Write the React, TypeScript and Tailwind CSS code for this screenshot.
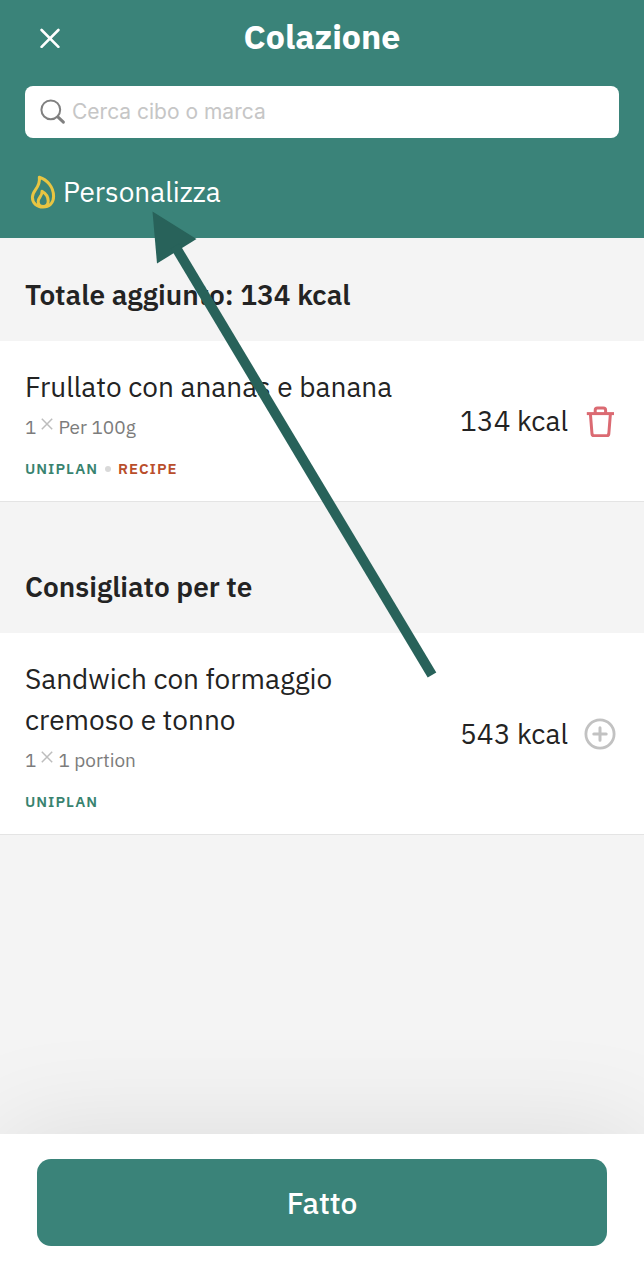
type Tag = {
  label: string;
  kind: "plan" | "recipe";
};

type Food = {
  name: string;
  amount: string;
  unit: string;
  kcal: number;
  tags: Tag[];
  added: boolean;
};

const addedFoods: Food[] = [
  {
    name: "Frullato con ananas e banana",
    amount: "1",
    unit: "Per 100g",
    kcal: 134,
    tags: [
      { label: "UNIPLAN", kind: "plan" },
      { label: "RECIPE", kind: "recipe" },
    ],
    added: true,
  },
];

const suggestedFoods: Food[] = [
  {
    name: "Sandwich con formaggio cremoso e tonno",
    amount: "1",
    unit: "1 portion",
    kcal: 543,
    tags: [{ label: "UNIPLAN", kind: "plan" }],
    added: false,
  },
];

const CloseIcon = () => (
  <svg viewBox="0 0 20 20" className="size-5" fill="none" stroke="currentColor" strokeWidth="2.6" strokeLinecap="round">
    <path d="M1.6 2 18.4 18.8M18.4 2 1.6 18.8" />
  </svg>
);

const SearchIcon = () => (
  <svg viewBox="0 0 26 26" className="size-[26px] shrink-0 text-[#808080]" fill="none" stroke="currentColor" strokeLinecap="round">
    <circle cx="10.8" cy="10.8" r="9.4" strokeWidth="2" />
    <path d="m17.8 17.8 5.6 5.4" strokeWidth="3" />
  </svg>
);

const FlameIcon = () => (
  <svg viewBox="0 0 26 34" className="h-[34px] w-[26px] shrink-0 text-[#e8c542]" fill="none" stroke="currentColor" strokeWidth="3" strokeLinejoin="round">
    <path d="M9.3 2.2C17 4.6 23.6 11.8 23.6 21.3 23.6 28 19.3 32 13 32 6.8 32 2.4 28 2.4 22.3 2.4 14.5 10.9 12.8 9.3 2.2Z" />
    <path d="M12 16.2C15.6 18.2 18.2 22 18.2 26 18.2 29.4 16.2 31.4 13.2 31.4 10 31.4 8.2 29.4 8.2 26.4 8.2 22.4 12.6 20.8 12 16.2Z" />
  </svg>
);

const TrashIcon = () => (
  <svg viewBox="0 0 32 32" className="size-8" fill="none" stroke="currentColor" strokeWidth="3" strokeLinejoin="round">
    <path d="M2.8 8.6H30" />
    <path d="M11.2 8.4V5.2Q11.2 3 13.4 3H19.4Q21.6 3 21.6 5.2V8.4" />
    <path d="M6.4 8.8 8 29Q8.2 30.8 10 30.8H22.8Q24.6 30.8 24.8 29L26.4 8.8" />
  </svg>
);

const PlusIcon = () => (
  <svg viewBox="0 0 32 32" className="size-8" fill="none" stroke="currentColor" strokeLinecap="round">
    <circle cx="16" cy="16" r="14.1" strokeWidth="2.8" />
    <path d="M9.8 16H22.2M16 9.8V22.2" strokeWidth="3" />
  </svg>
);

const TimesIcon = () => (
  <svg viewBox="0 0 12 12" className="mb-2 size-3 text-[#bdbdbd]" fill="none" stroke="currentColor" strokeWidth="1.5">
    <path d="M.8.8 11.2 11.2M11.2.8.8 11.2" />
  </svg>
);

const SectionTitle = ({ children, spaced }: { children: string; spaced?: boolean }) => (
  <h2 className={`${spaced ? "pt-16" : "pt-9"} px-[25px] pb-[26px] text-[28px] leading-[41px] font-semibold`}>
    {children}
  </h2>
);

const FoodRow = ({ food }: { food: Food }) => (
  <li className="flex items-center border-b border-[#e4e4e4] bg-white pr-7 pl-[25px]">
    <div className="min-w-0 flex-1 pt-[25px] pb-3">
      <h3 className="max-w-[380px] text-[28px] leading-[41px]">{food.name}</h3>
      <p className="flex items-center gap-[5px] text-[19px] leading-[41px] text-[#7c7c7c]">
        <span>{food.amount}</span>
        <TimesIcon />
        <span>{food.unit}</span>
      </p>
      <ul className="flex items-center text-[15px] leading-[41px] font-semibold tracking-[1px]">
        {food.tags.map((tag, i) => (
          <li
            key={tag.label}
            className={`flex items-center ${tag.kind === "plan" ? "text-[#38836f]" : "text-[#b94e2b]"}`}
          >
            {i > 0 && <span className="mx-[7px] size-[6px] rounded-full bg-[#d9d9d9]" />}
            {tag.label}
          </li>
        ))}
      </ul>
    </div>
    <span className="mr-4 text-[28px] whitespace-nowrap">{food.kcal} kcal</span>
    {food.added ? (
      <button type="button" aria-label="Rimuovi" className="text-[#db6a72]">
        <TrashIcon />
      </button>
    ) : (
      <button type="button" aria-label="Aggiungi" className="text-[#c2c2c2]">
        <PlusIcon />
      </button>
    )}
  </li>
);

// Annotation arrow pointing at "Personalizza"
const PointerArrow = () => (
  <svg viewBox="0 0 290 480" className="pointer-events-none absolute top-[206px] left-[148px] h-[480px] w-[290px] text-[#28625a]">
    <path d="M4.5 5.5 48.5 33 9 57.5Z" fill="currentColor" />
    <path d="M27 40 284 469" stroke="currentColor" strokeWidth="10" />
  </svg>
);

export default function App() {
  const total = addedFoods.reduce((sum, food) => sum + food.kcal, 0);

  return (
    <div className="relative flex min-h-screen flex-col bg-[#f4f4f4] font-['IBM_Plex_Sans','Noto_Sans',sans-serif] text-[#232323]">
      <header className="bg-[#3a8379] px-[25px] pt-3 pb-6 text-white">
        <div className="mb-[26px] grid h-12 grid-cols-[50px_1fr_50px] items-center">
          <button type="button" aria-label="Chiudi" className="justify-self-center pt-1">
            <CloseIcon />
          </button>
          <h1 className="text-center text-[34px] leading-[48px] font-bold">Colazione</h1>
        </div>
        <label className="flex h-[52px] items-center gap-[6px] rounded-lg bg-white px-[15px]">
          <SearchIcon />
          <input
            type="search"
            aria-label="Cerca cibo o marca"
            placeholder="Cerca cibo o marca"
            className="min-w-0 flex-1 font-['Inter',sans-serif] text-[21px] text-[#232323] outline-none placeholder:text-[#c6c6c6]"
          />
        </label>
        <button type="button" className="mt-8 flex h-11 items-center gap-[7px] pl-[5px] text-[28px]">
          <FlameIcon />
          Personalizza
        </button>
      </header>

      <main className="flex-1">
        <SectionTitle>{`Totale aggiunto: ${total} kcal`}</SectionTitle>
        <ul>
          {addedFoods.map((food) => (
            <FoodRow key={food.name} food={food} />
          ))}
        </ul>
        <SectionTitle spaced>Consigliato per te</SectionTitle>
        <ul>
          {suggestedFoods.map((food) => (
            <FoodRow key={food.name} food={food} />
          ))}
        </ul>
      </main>

      <footer className="sticky bottom-0 bg-white px-[37px] pt-[25px] pb-[34px] shadow-[0_0_110px_rgba(0,0,0,0.1)]">
        <button type="button" className="h-[87px] w-full rounded-[14px] bg-[#3a8379] text-[30px] font-medium text-white">
          Fatto
        </button>
      </footer>

      <PointerArrow />
    </div>
  );
}
